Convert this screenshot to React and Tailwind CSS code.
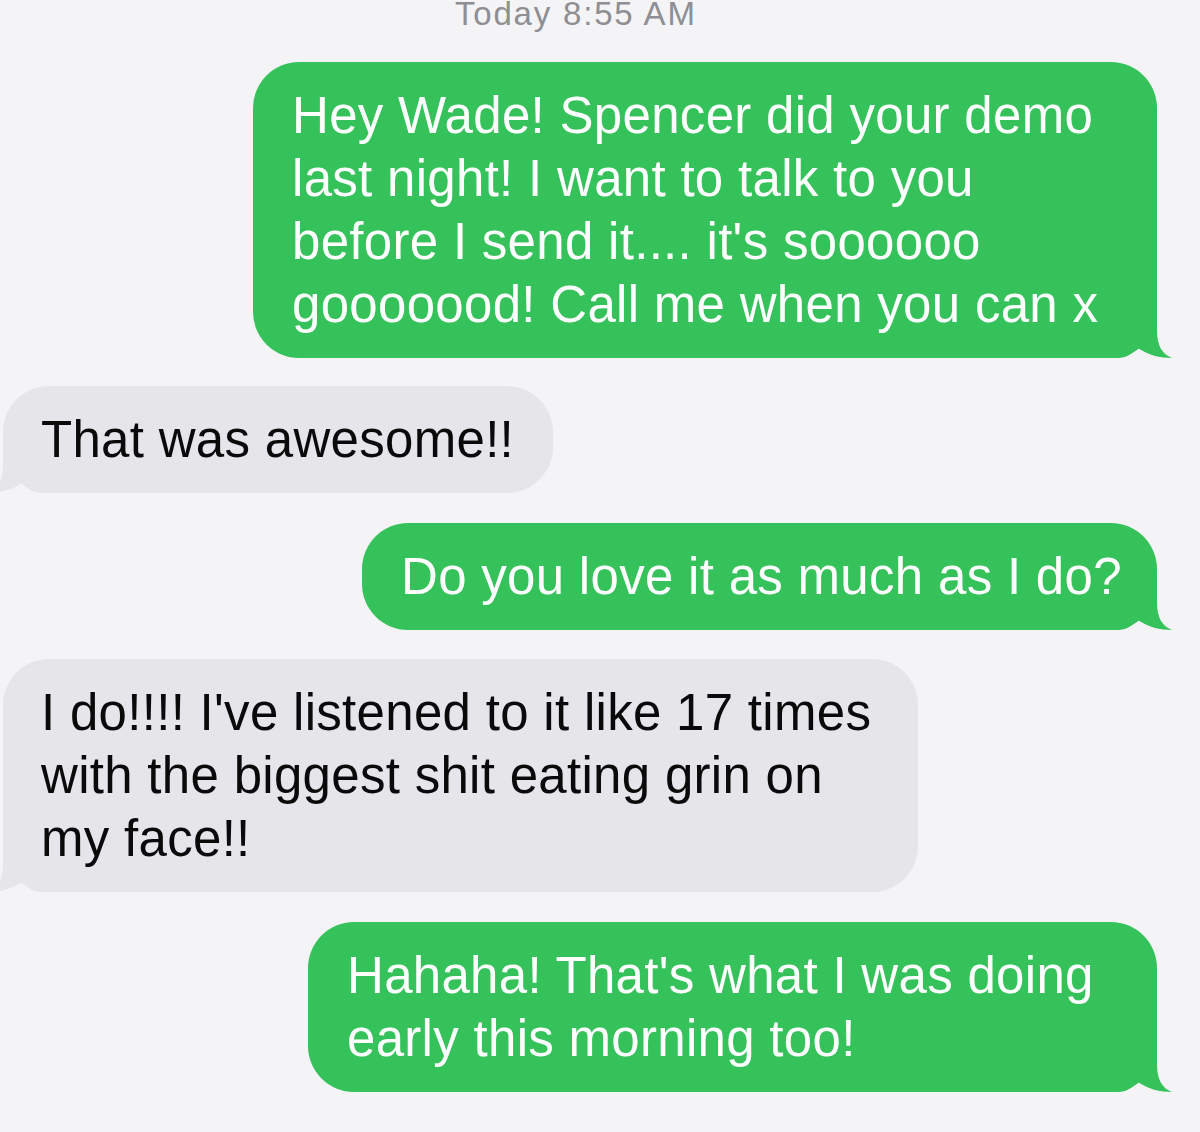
const green = "#36c25a";
const gray = "#e5e5ea";

function TailRight({ color }) {
  return (
    <svg
      className="absolute right-[-15px] bottom-0"
      width="60"
      height="50"
      viewBox="0 0 60 50"
    >
      <path
        d="M0 0 H45 V22 C45 38 50 46 60 50 C48 50 36 47 26 40 C20 46 14 50 6 50 H0 Z"
        fill={color}
      />
    </svg>
  );
}

function TailLeft({ color }) {
  return (
    <svg
      className="absolute left-[-15px] bottom-0 -scale-x-100"
      width="60"
      height="50"
      viewBox="0 0 60 50"
    >
      <path
        d="M0 0 H45 V22 C45 38 50 46 60 50 C48 50 36 47 26 40 C20 46 14 50 6 50 H0 Z"
        fill={color}
      />
    </svg>
  );
}

function Sent({ lines, width, className = "" }) {
  return (
    <div className={`flex justify-end pr-[43px] ${className}`}>
      <div
        className="relative rounded-[46px] bg-[#36c25a] pl-[39px] py-[22px] text-white text-[51px] leading-[63px] tracking-[0.3px] whitespace-nowrap"
        style={{ width }}
      >
        <span className="relative z-10">
          {lines.map((l, i) => (
            <div key={i}>{l}</div>
          ))}
        </span>
        <TailRight color={green} />
      </div>
    </div>
  );
}

function Received({ lines, width, className = "" }) {
  return (
    <div className={`flex justify-start pl-[3px] ${className}`}>
      <div
        className="relative rounded-[46px] bg-[#e5e5ea] pl-[38px] py-[22px] text-[#0a0a0a] text-[51px] leading-[63px] tracking-[0.3px] whitespace-nowrap"
        style={{ width }}
      >
        <span className="relative z-10">
          {lines.map((l, i) => (
            <div key={i}>{l}</div>
          ))}
        </span>
        <TailLeft color={gray} />
      </div>
    </div>
  );
}

export default function App() {
  return (
    <div
      className="w-[1200px] h-[1132px] overflow-hidden bg-[#f4f4f6]"
      style={{ fontFamily: '"Liberation Sans", Arial, sans-serif' }}
    >
      <div className="h-[62px]">
        <div className="relative -top-[3px] pl-[455px] text-[33px] leading-[33px] tracking-[1.8px] text-[#8e8e93]">
          Today 8:55 AM
        </div>
      </div>

      <Sent
        width={904}
        lines={[
          "Hey Wade! Spencer did your demo",
          "last night! I want to talk to you",
          "before I send it.... it's soooooo",
          "gooooood! Call me when you can x",
        ]}
      />

      <Received className="mt-[28px]" width={550} lines={["That was awesome!!"]} />

      <Sent className="mt-[30px]" width={795} lines={["Do you love it as much as I do?"]} />

      <Received
        className="mt-[29px]"
        width={915}
        lines={[
          "I do!!!! I've listened to it like 17 times",
          "with the biggest shit eating grin on",
          "my face!!",
        ]}
      />

      <Sent
        className="mt-[30px]"
        width={849}
        lines={["Hahaha! That's what I was doing", "early this morning too!"]}
      />
    </div>
  );
}
